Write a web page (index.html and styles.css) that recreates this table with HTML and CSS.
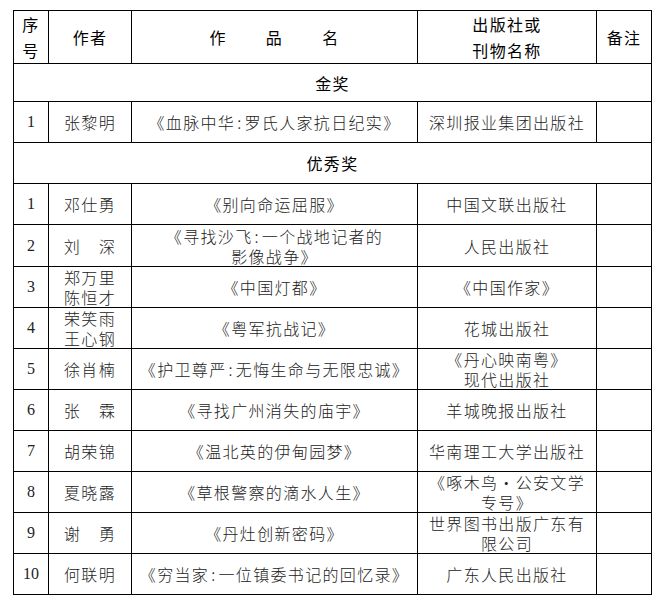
FILE: index.html
```html
<!DOCTYPE html>
<html lang="zh-CN">
<head>
<meta charset="utf-8">
<title>获奖作品名单</title>
<link rel="stylesheet" href="styles.css">
</head>
<body>
<table class="awards">
  <colgroup>
    <col class="c-no">
    <col class="c-author">
    <col class="c-title">
    <col class="c-pub">
    <col class="c-note">
  </colgroup>
  <thead>
    <tr class="head">
      <th>序<br>号</th>
      <th>作者</th>
      <th>作<span class="sp-wide"></span>品<span class="sp-wide"></span>名</th>
      <th>出版社或<br>刊物名称</th>
      <th>备注</th>
    </tr>
  </thead>
  <tbody>
    <tr class="section"><td colspan="5">金奖</td></tr>
    <tr class="row">
      <td class="num">1</td>
      <td>张黎明</td>
      <td>《血脉中华<span class="colon">:</span>罗氏人家抗日纪实》</td>
      <td>深圳报业集团出版社</td>
      <td></td>
    </tr>
    <tr class="section"><td colspan="5">优秀奖</td></tr>
    <tr class="row">
      <td class="num">1</td>
      <td>邓仕勇</td>
      <td>《别向命运屈服》</td>
      <td>中国文联出版社</td>
      <td></td>
    </tr>
    <tr class="row tall">
      <td class="num">2</td>
      <td>刘<span class="sp"></span>深</td>
      <td>《寻找沙飞<span class="colon">:</span>一个战地记者的<br>影像战争》</td>
      <td>人民出版社</td>
      <td></td>
    </tr>
    <tr class="row">
      <td class="num">3</td>
      <td>郑万里<br>陈恒才</td>
      <td>《中国灯都》</td>
      <td>《中国作家》</td>
      <td></td>
    </tr>
    <tr class="row">
      <td class="num">4</td>
      <td>荣笑雨<br>王心钢</td>
      <td>《粤军抗战记》</td>
      <td>花城出版社</td>
      <td></td>
    </tr>
    <tr class="row">
      <td class="num">5</td>
      <td>徐肖楠</td>
      <td>《护卫尊严<span class="colon">:</span>无悔生命与无限忠诚》</td>
      <td>《丹心映南粤》<br>现代出版社</td>
      <td></td>
    </tr>
    <tr class="row">
      <td class="num">6</td>
      <td>张<span class="sp"></span>霖</td>
      <td>《寻找广州消失的庙宇》</td>
      <td>羊城晚报出版社</td>
      <td></td>
    </tr>
    <tr class="row">
      <td class="num">7</td>
      <td>胡荣锦</td>
      <td>《温北英的伊甸园梦》</td>
      <td>华南理工大学出版社</td>
      <td></td>
    </tr>
    <tr class="row">
      <td class="num">8</td>
      <td>夏晓露</td>
      <td>《草根警察的滴水人生》</td>
      <td>《啄木鸟・公安文学<br>专号》</td>
      <td></td>
    </tr>
    <tr class="row">
      <td class="num">9</td>
      <td>谢<span class="sp"></span>勇</td>
      <td>《丹灶创新密码》</td>
      <td>世界图书出版广东有<br>限公司</td>
      <td></td>
    </tr>
    <tr class="row">
      <td class="num">10</td>
      <td>何联明</td>
      <td>《穷当家<span class="colon">:</span>一位镇委书记的回忆录》</td>
      <td>广东人民出版社</td>
      <td></td>
    </tr>
  </tbody>
</table>
</body>
</html>
```
FILE: styles.css
```css
html, body {
  margin: 0;
  padding: 0;
  background: #ffffff;
}

body {
  padding: 10px 0 0 13px;
  font-family: "Noto Sans CJK SC", "Noto Sans", sans-serif;
  font-size: 16px;
  color: #222222;
}

.awards {
  border-collapse: collapse;
  table-layout: fixed;
  width: 639px;
}

.c-no { width: 35px; }
.c-author { width: 83px; }
.c-title { width: 286px; }
.c-pub { width: 179px; }
.c-note { width: 55px; }

.awards th,
.awards td {
  border: 1px solid #000;
  padding: 0 2px;
  text-align: center;
  vertical-align: middle;
  letter-spacing: 1.33px;
  line-height: 20px;
  white-space: nowrap;
  font-weight: 300;
}

.awards th {
  font-weight: 400;
  color: #000;
  line-height: 26px;
}

.head { height: 53px; }

.section td {
  font-weight: 400;
  color: #000;
}

.awards tbody tr.section:first-child { height: 38px; }
.section { height: 41px; }
.row { height: 41px; }
.row.tall { height: 42px; }

.awards td.num {
  font-family: "Liberation Serif", "Times New Roman", serif;
  font-weight: 400;
  letter-spacing: 0;
  padding: 0;
}

.colon {
  display: inline-block;
  width: 8px;
  text-align: center;
  letter-spacing: 0;
  margin-right: 1.33px;
}

.sp {
  display: inline-block;
  width: 18px;
}

.sp-wide {
  display: inline-block;
  width: 39px;
}
```
